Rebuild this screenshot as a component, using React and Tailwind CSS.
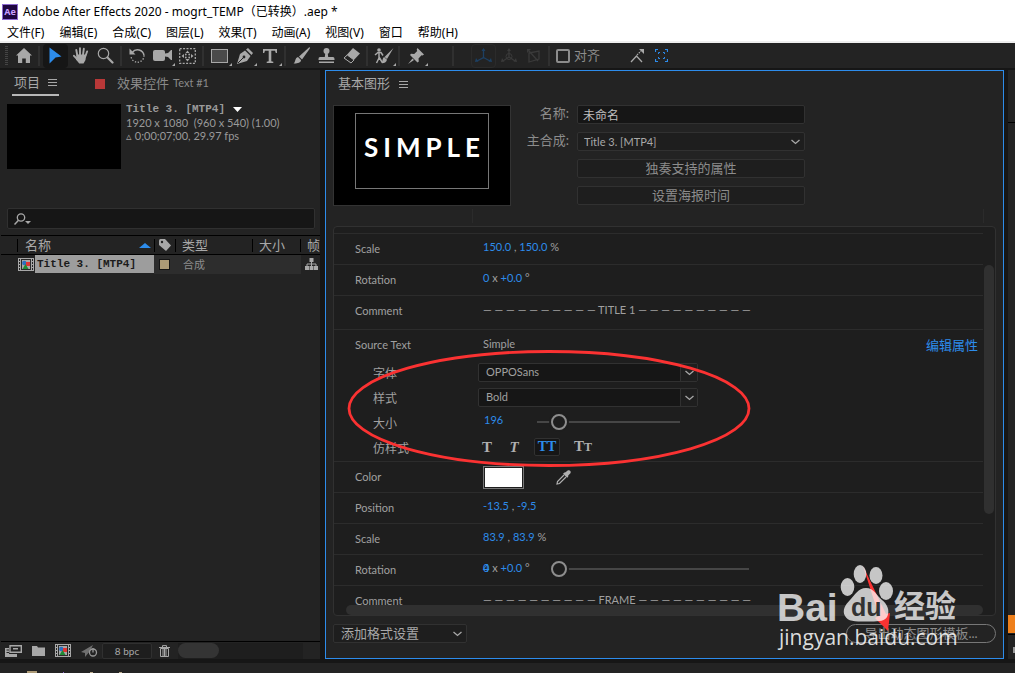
import React from "react";
import { clsx } from "clsx";

const menus = [
  "文件(F)",
  "编辑(E)",
  "合成(C)",
  "图层(L)",
  "效果(T)",
  "动画(A)",
  "视图(V)",
  "窗口",
  "帮助(H)",
];

/* ---------- shared bits ---------- */

const Svg = ({ w, h, className, children }) => (
  <svg
    width={w}
    height={h}
    viewBox={`0 0 ${w} ${h}`}
    fill="currentColor"
    className={clsx("shrink-0", className)}
    aria-hidden="true"
  >
    {children}
  </svg>
);

const Chevron = ({ className }) => (
  <Svg w={9} h={6} className={className}>
    <path d="M0.5 1L4.5 4.5L8.5 1" fill="none" stroke="currentColor" strokeWidth="1.3" />
  </Svg>
);

const PanelMenu = () => (
  <Svg w={9} h={9}>
    <path d="M0 1.5h9M0 4.5h9M0 7.5h9" stroke="currentColor" strokeWidth="1" />
  </Svg>
);

const CompIcon = () => (
  <Svg w={16} h={13}>
    <rect width="16" height="13" fill="#a8a8a8" />
    <path
      d="M1 1h1v2H1zM1 4h1v2H1zM1 7h1v2H1zM1 10h1v2H1zM14 1h1v2h-1zM14 4h1v2h-1zM14 7h1v2h-1zM14 10h1v2h-1z"
      fill="#232323"
    />
    <rect x="3" y="1" width="10" height="11" fill="#2b2b2b" />
    <rect x="4" y="2" width="8" height="9" fill="#a8a8a8" />
    <circle cx="6.3" cy="5" r="2.2" fill="#2d6fc0" />
    <rect x="8" y="4" width="4" height="4" fill="#e03434" />
    <path d="M7.5 6l3 5h-6z" fill="#1f8a34" />
  </Svg>
);

/* ---------- toolbar ---------- */

const Divider = ({ className }) => (
  <div className={clsx("w-[2px] h-5 bg-[#303030] ml-[2px] mr-[3px]", className)} />
);

const Tool = ({ label, active, more, children, className }) => (
  <button
    aria-label={label}
    className={clsx(
      "relative w-[25px] h-[24px] flex items-center justify-center rounded-sm",
      active && "bg-[#161616] text-[#2d8ceb]",
      className
    )}
  >
    {children}
    {more && (
      <Svg w={3} h={3} className="absolute right-0 bottom-[2px]">
        <path d="M3 0v3H0z" />
      </Svg>
    )}
  </button>
);

const Toolbar = () => (
  <div className="h-[25px] shrink-0 bg-[#232323] text-[#a8a8a8] flex items-center pl-[5px]">
    <div className="w-[3px] h-[19px] mr-[3px] bg-[repeating-linear-gradient(#444_0_1px,transparent_1px_2px)]" />
    <Tool label="主页">
      <Svg w={16} h={15}>
        <path d="M8 0l8 7.5h-2V15H9.8v-4.5H6.200V15H2V7.5H0z" />
      </Svg>
    </Tool>
    <Divider />
    <Tool label="选取" active>
      <Svg w={13} h={17}>
        <path d="M0.5 0.5L12.5 9.5L6.5 10.5L0.5 16.5z" />
      </Svg>
    </Tool>
    <Tool label="手形">
      <Svg w={16} h={17}>
        <path
          d="M4.3 8.5L3.3 3M7 8V1.2M10 8l.8-6.2M12.3 9.5l1.8-5M5 13L1 8.8"
          fill="none"
          stroke="currentColor"
          strokeWidth="1.9"
          strokeLinecap="round"
        />
        <path d="M3.5 7.5h9.8L12.5 13l-2 3.5H6.2L3 12.5z" />
      </Svg>
    </Tool>
    <Tool label="缩放">
      <Svg w={17} h={17}>
        <circle cx="6.5" cy="6.5" r="5.2" fill="none" stroke="currentColor" strokeWidth="1.2" />
        <path d="M10.5 10.5l5 5" stroke="currentColor" strokeWidth="2.2" strokeLinecap="round" />
      </Svg>
    </Tool>
    <Divider />
    <Tool label="旋转">
      <Svg w={17} h={17}>
        <path d="M3.3 5.5A6.5 6.5 0 0 1 15 8.5" fill="none" stroke="currentColor" strokeWidth="1.5" />
        <path
          d="M15 8.5A6.5 6.5 0 0 1 2 9"
          fill="none"
          stroke="currentColor"
          strokeWidth="1.3"
          strokeDasharray="1.3 1.6"
        />
        <path d="M0.5 1.5v6h6z" />
      </Svg>
    </Tool>
    <Tool label="摄像机" more>
      <Svg w={19} h={13}>
        <rect y="1" width="12" height="11" rx="2" />
        <path d="M12 4.5L15 4l3-3h1v10h-1l-3-3-3-.5z" />
      </Svg>
    </Tool>
    <Tool label="向后平移">
      <Svg w={17} h={16}>
        <rect
          x=".7"
          y=".7"
          width="15.6"
          height="14.6"
          fill="none"
          stroke="currentColor"
          strokeWidth="1.3"
          strokeDasharray="2 1.4"
        />
        <path d="M8.500 2.5l2 2.5h-4zM8.500 13.5l2-2.5h-4zM2.5 8L5 6v4zM14.5 8L12 6v4z" />
        <circle cx="6.8" cy="6.5" r=".9" />
        <circle cx="10.2" cy="6.5" r=".9" />
        <circle cx="6.8" cy="9.5" r=".9" />
        <circle cx="10.2" cy="9.5" r=".9" />
      </Svg>
    </Tool>
    <Divider />
    <Tool label="矩形" more>
      <Svg w={17} h={14}>
        <rect x=".5" y=".5" width="16" height="13" fill="#4a4a4a" stroke="currentColor" />
      </Svg>
    </Tool>
    <Tool label="钢笔" more>
      <Svg w={16} h={16}>
        <path d="M0 16L3 6l5-3.5L13.5 8 10 13z" />
        <path d="M9 1.5L11 0l5 5-1.5 2z" />
        <path d="M1 15l5.5-5.5" stroke="#232323" strokeWidth="1" />
        <circle cx="7" cy="9" r="1.4" fill="#232323" />
      </Svg>
    </Tool>
    <Tool label="文字" more>
      <Svg w={14} h={14}>
        <path d="M0 0h14v4h-1.2l-.8-2.3H8.3v10.6l2 .5V14H3.7v-1.2l2-.5V1.7H2L1.2 4H0z" />
      </Svg>
    </Tool>
    <Divider />
    <Tool label="画笔">
      <Svg w={17} h={17}>
        <path d="M16.5 0q.8.8 0 2L9 12.5 6 9.5z" />
        <path d="M5 10l3 3c0 3-4.5 3.800-7.500 3.500 2-1 1.500-6 4.500-6.500z" />
      </Svg>
    </Tool>
    <Tool label="仿制图章">
      <Svg w={17} h={16}>
        <circle cx="8.5" cy="3" r="3" />
        <path d="M7.3 5h2.400l.5 4H15q1.5 0 1.5 2v1h-16v-1q0-2 1.5-2h4.800zM1 13.500h15V15H1z" />
      </Svg>
    </Tool>
    <Tool label="橡皮擦">
      <Svg w={18} h={17}>
        <path d="M10 1l7 5.5L8 16 1 11z" />
        <path d="M4.3 8L11 13 8 16 1 11z" fill="#232323" stroke="currentColor" />
      </Svg>
    </Tool>
    <Divider />
    <Tool label="Roto 笔刷" more>
      <Svg w={20} h={16}>
        <circle cx="5" cy="2" r="1.800" />
        <path d="M1 7l3-2.5h3l2 3M5 5v5l-2.5 5M5 9l3 5" fill="none" stroke="currentColor" strokeWidth="1.5" />
        <path d="M19.5 0L13 11l-2.5-2zM10 9l3 2.700c-.5 3-4 3.800-6 3.300 2-1 1-4.500 3-6z" />
      </Svg>
    </Tool>
    <Divider />
    <Tool label="操控点" more>
      <Svg w={16} h={16}>
        <path d="M9.500 0L16 6.500l-1.500 1-1-.3-3 3.300.3 3-1.300 1L2 7l1-1.300 3.200.3 3-3-.5-1.300zM4.500 10.500l1.500 1.500-6 4z" />
      </Svg>
    </Tool>
    <Divider className="ml-[24px] mr-[17px]" />
    <div className="flex items-center text-[#3a3a3a]">
      <Tool label="本地轴" className="border border-[#2b2b2b] text-[#1d4063]">
        <Svg w={17} h={15}>
          <path d="M8.5 1v8.5L2 13M8.5 9.5L15 13" fill="none" stroke="currentColor" strokeWidth="1.3" />
          <path d="M6.5 3L8.5 0l2 3zM0 14l1-4 2.500 3.500zM17 14l-1-4-2.500 3.500z" />
        </Svg>
      </Tool>
      <Tool label="世界轴">
        <Svg w={16} h={15}>
          <path d="M8 1v8L2 13M8 9l6 4" fill="none" stroke="currentColor" strokeWidth="1.3" />
          <circle cx="8" cy="8.5" r="3" fill="none" stroke="currentColor" />
          <path d="M6 3l2-3 2 3zM0 14l1-4 2.500 3.500zM16 14l-1-4-2.500 3.500z" />
        </Svg>
      </Tool>
      <Tool label="视图轴">
        <Svg w={14} h={14}>
          <path d="M2 4l10-2v8L2 13zM2 2l9 10" fill="none" stroke="currentColor" strokeWidth="1.3" />
          <path d="M0 0h4L0 4z" />
        </Svg>
      </Tool>
    </div>
    <Divider className="mr-[6px]" />
    <label className="flex items-center gap-1 text-[13px] text-[#8c8c8c]">
      <input
        type="checkbox"
        className="appearance-none w-[14px] h-[14px] border-2 border-[#8c8c8c] rounded-xs"
      />
      对齐
    </label>
    <Tool label="对齐选项" className="ml-6">
      <Svg w={14} h={14}>
        <path d="M1 13l5.500-6L12 13" fill="none" stroke="currentColor" strokeWidth="1.3" />
        <path d="M7 6l4-4" stroke="currentColor" strokeWidth="1.2" strokeDasharray="1.5 1" />
        <path d="M9 0h5v5z" />
      </Svg>
    </Tool>
    <Tool label="对齐范围" className="text-[#2d8ceb]">
      <Svg w={13} h={13}>
        <path
          d="M3 .5H.5V3M10 .5h2.500V3M3 12.500H.5V10M10 12.500h2.500V10"
          fill="none"
          stroke="currentColor"
          strokeWidth="1.2"
        />
        <path
          d="M3.500 5V3.500H5M8 3.500h1.500V5M3.500 8v1.500H5M8 9.500h1.500V8"
          fill="none"
          stroke="currentColor"
        />
      </Svg>
    </Tool>
  </div>
);

/* ---------- project panel ---------- */

const ProjectPanel = () => (
  <section className="w-[320px] shrink-0 bg-[#232323] flex flex-col pl-px">
    <div className="flex items-start h-[26px] text-[13px] text-[#a8a8a8]">
      <div className="ml-[11px] px-[2px] pt-px h-[26px] flex items-center gap-2 border-b-2 border-[#b8b8b8]">
        项目 <PanelMenu />
      </div>
      <div className="flex items-center h-[26px] pt-px ml-9 text-[#8a8a8a]">
        <span className="w-[10px] h-[10px] bg-[#b83838] mr-3" />
        效果控件<span className="text-[11px] ml-1">Text #1</span>
      </div>
    </div>

    {/* Selected item */}
    <div className="flex items-start gap-[5px] mt-[7px] pl-[6px] h-[105px] text-[11px] leading-[13px] text-[#9a9a9a]">
      <div className="w-[114px] h-[65px] bg-black mt-px shrink-0" />
      <div className="whitespace-pre">
        <p className="flex items-center gap-2 font-bold font-['Liberation_Mono']">
          Title 3. [MTP4]
          <Svg w={9} h={6} className="text-white">
            <path d="M0 0h9L4.500 5z" />
          </Svg>
        </p>
        <p>1920 x 1080  (960 x 540) (1.00)</p>
        <p>▵ 0;00;07;00, 29.97 fps</p>
      </div>
    </div>

    {/* Search */}
    <div className="ml-[6px] mr-[5px] h-[21px] bg-[#161616] border border-[#303030] rounded-xs flex items-center pl-[6px] text-[#a8a8a8]">
      <Svg w={17} h={12}>
        <circle cx="7" cy="4.5" r="3.700" fill="none" stroke="currentColor" strokeWidth="1.3" />
        <path d="M4.500 7.200L.5 11.500" stroke="currentColor" strokeWidth="1.5" />
        <path d="M11 8h6l-3 3z" />
      </Svg>
      <input aria-label="搜索" className="flex-1 min-w-0 bg-transparent outline-none" />
    </div>

    <table className="mt-[6px] w-full table-fixed text-left text-[13px] text-[#a8a8a8] border-collapse">
      <thead>
        <tr className="h-[19px] border-y border-black leading-[17px]">
          <th className="w-[153px] font-normal p-0">
            <div className="flex items-center justify-between ml-4 pl-[7px] pr-[3px] border-l border-black h-[13px]">
              名称
              <Svg w={12} h={5} className="text-[#2d8ceb]">
                <path d="M0 5l6-5 6 5z" />
              </Svg>
            </div>
          </th>
          <th className="w-[22px] font-normal p-0">
            <div className="border-x border-black h-[13px] flex items-center justify-center">
              <Svg w={12} h={12}>
                <path d="M0 1.500Q0 0 1.500 0H6l6 6.500L7 12 0 6z" />
                <circle cx="3" cy="3" r="1.200" fill="#232323" />
              </Svg>
            </div>
          </th>
          <th className="w-[76px] font-normal py-0 pl-[6px]">类型</th>
          <th className="w-[49px] font-normal p-0">
            <div className="border-x border-black h-[13px] flex items-center pl-[6px]">大小</div>
          </th>
          <th className="font-normal py-0 pl-[6px] overflow-hidden">帧</th>
        </tr>
      </thead>
      <tbody>
        <tr className="h-[19px] leading-[17px]">
          <td className="p-0">
            <div className="flex items-center gap-px pl-[17px]">
              <CompIcon />
              <span className="flex-1 h-[18px] pl-[2px] bg-[#9d9d9d] text-[#1b1b1b] text-[11px] leading-[19px] font-bold font-['Liberation_Mono']">
                Title 3. [MTP4]
              </span>
            </div>
          </td>
          <td className="p-0 bg-[#2d2d2d]">
            <div className="w-[11px] h-[11px] ml-[5px] bg-[#ac9a76] border border-[#151515]" />
          </td>
          <td className="py-0 pl-[7px] bg-[#2d2d2d] text-[11px] text-[#8c8c8c]">合成</td>
          <td className="p-0 bg-[#2d2d2d]" />
          <td className="py-0 pl-1">
            <Svg w={13} h={12}>
              <path d="M4.500 0h4v4h-4zM0 8h4v4H0zM4.500 8h4v4h-4zM9 8h4v4H9z" />
              <path d="M6.500 4v4M2 8V6h9v2" fill="none" stroke="currentColor" />
            </Svg>
          </td>
        </tr>
      </tbody>
    </table>

    {/* Footer */}
    <div className="mt-auto h-[18px] border-t border-black flex items-center text-[#a8a8a8] pl-1">
      <button aria-label="解释素材">
        <Svg w={17} h={12}>
          <path d="M5 .7h11.300v6.600H5z" fill="none" stroke="currentColor" strokeWidth="1.4" />
          <path d="M8 3h5v1.500H8zM0 3h4v1.500H1.500v1H4V7H1.500v1H4v1h8v3H0z" />
        </Svg>
      </button>
      <button aria-label="新建文件夹" className="ml-[10px]">
        <Svg w={13} h={10}>
          <path d="M0 0h5l1 1.500h7V10H0z" />
        </Svg>
      </button>
      <button aria-label="新建合成" className="ml-[10px]">
        <CompIcon />
      </button>
      <button aria-label="项目设置" className="ml-[10px] text-[#707070]">
        <Svg w={17} h={12}>
          <path d="M0 7L12 0 9 6 4 12V8z" />
          <circle cx="12" cy="7.5" r="3.500" fill="#232323" stroke="#999" strokeWidth="1.3" />
          <path d="M12 3v4.500" stroke="#999" strokeWidth="1.3" />
        </Svg>
      </button>
      <button className="ml-1 w-[50px] h-[16px] bg-[#1e1e1e] border border-[#303030] rounded-xs text-[10px] leading-[14px]">
        8 bpc
      </button>
      <button aria-label="删除" className="ml-[7px]">
        <Svg w={11} h={12}>
          <path d="M0 2.500h11M3.500 2V.6h4V2" fill="none" stroke="currentColor" />
          <path d="M1.500 3.500h8v8h-8zM4 4v7M5.500 4v7M7 4v7" fill="none" stroke="currentColor" />
        </Svg>
      </button>
      <div className="ml-[8px] flex-1 h-[16px] bg-[#1e1e1e] mr-[17px]">
        <div className="w-[41px] h-[15px] rounded-full bg-[#343434]" />
      </div>
    </div>
  </section>
);

/* ---------- essential graphics panel ---------- */

const SelectBox = ({ id, label, value, className, arrowClass, textClass }) => (
  <div className={clsx("relative h-[19px] border border-[#313131] rounded-xs", className)}>
    <select
      id={id}
      aria-label={label}
      className={clsx("appearance-none block w-full h-full bg-transparent outline-none", textClass)}
    >
      <option>{value}</option>
    </select>
    <span
      className={clsx(
        "absolute right-0 inset-y-0 w-[17px] flex items-center justify-center text-[#a8a8a8] pointer-events-none",
        arrowClass
      )}
    >
      <Chevron />
    </span>
  </div>
);

const Slider = ({ label, value, className }) => (
  <input
    type="range"
    aria-label={label}
    defaultValue={value}
    className={clsx(
      "appearance-none h-4 bg-transparent [&::-webkit-slider-runnable-track]:h-[2px] [&::-webkit-slider-runnable-track]:bg-[#464646] [&::-webkit-slider-thumb]:appearance-none [&::-webkit-slider-thumb]:w-4 [&::-webkit-slider-thumb]:h-4 [&::-webkit-slider-thumb]:-mt-[7px] [&::-webkit-slider-thumb]:rounded-full [&::-webkit-slider-thumb]:border-2 [&::-webkit-slider-thumb]:border-[#8e8e8e] [&::-webkit-slider-thumb]:bg-[#1e1e1e] [&::-webkit-slider-thumb]:shadow-[0_0_0_2px_#1e1e1e]",
      className
    )}
  />
);

const Row = ({ label, tall, last, children }) => (
  <div
    className={clsx(
      "flex items-center shrink-0 pl-[21px]",
      tall ? "h-[34px] pb-[2px]" : "h-[31px]",
      !last && "border-b border-[#2c2c2c]"
    )}
  >
    <span className="w-[128px] shrink-0">{label}</span>
    <div className="flex items-center pb-[3px] whitespace-pre">{children}</div>
  </div>
);

const SubRow = ({ label, htmlFor, children }) => (
  <div className="flex items-center h-[25px] pl-[39px]">
    <label htmlFor={htmlFor} className="w-[105px] shrink-0 text-[12px]">
      {label}
    </label>
    {children}
  </div>
);

const Num = ({ children }) => <span className="text-[#2d8ceb]">{children}</span>;

const Properties = () => (
  <div className="relative flex-1 min-h-0 flex border border-[#313131] rounded-sm bg-[#1e1e1e] text-[11px] text-[#a0a0a0] overflow-hidden">
    <div className="flex-1 min-w-0 flex flex-col">
      <div className="h-[7px] shrink-0 border-b border-[#2c2c2c]" />
      <Row label="Scale">
        <Num>150.0</Num> , <Num>150.0</Num>{" %"}
      </Row>
      <Row label="Rotation">
        <Num>0</Num> x <Num>+0.0</Num> °
      </Row>
      <Row label="Comment" tall>
        — — — — — — — — — — TITLE 1 — — — — — — — — — —
      </Row>

      <div className="h-[132px] shrink-0 border-b border-[#2c2c2c]">
        <div className="flex items-center h-[31px] pl-[21px] pr-[5px]">
          <span className="w-[128px]">Source Text</span>
          <span className="pb-[2px]">Simple</span>
          <a href="#edit" className="ml-auto text-[13px] text-[#2d8ceb]">
            编辑属性
          </a>
        </div>
        <SubRow label="字体" htmlFor="font">
          <SelectBox
            id="font"
            value="OPPOSans"
            className="w-[220px] mb-[2px] bg-[#161616]"
            textClass="pl-[7px]"
            arrowClass="border-l border-[#313131] bg-[#1e1e1e]"
          />
        </SubRow>
        <SubRow label="样式" htmlFor="style">
          <SelectBox
            id="style"
            value="Bold"
            className="w-[220px] mb-[2px] bg-[#161616]"
            textClass="pl-[7px]"
            arrowClass="border-l border-[#313131] bg-[#1e1e1e]"
          />
        </SubRow>
        <SubRow label="大小">
          <span className="w-[59px] pl-[6px] pb-[6px] text-[#2d8ceb]">196</span>
          <Slider label="大小" value={11} className="w-[143px] mb-[3px]" />
        </SubRow>
        <SubRow label="仿样式">
          <div className="flex items-center pb-1 font-['Liberation_Serif'] text-[15px] leading-[16px] text-[#b0b0b0]">
            <button className="w-[18px] font-bold">T</button>
            <button className="w-[18px] ml-[9px] font-bold italic">T</button>
            <button className="w-[26px] h-[18px] ml-[11px] border border-[#313131] rounded-xs bg-[#161616] text-[#2d8ceb] font-bold text-[14px]">
              TT
            </button>
            <button className="ml-[14px] font-bold">
              T<span className="text-[12px]">T</span>
            </button>
          </div>
        </SubRow>
      </div>

      <div className="flex items-center h-[31px] shrink-0 pl-[21px] border-b border-[#2c2c2c]">
        <span className="w-[128px]">Color</span>
        <button
          aria-label="Color"
          className="w-[41px] h-[23px] bg-white border border-[#777] ring-1 ring-inset ring-[#1e1e1e]"
        />
        <button aria-label="吸管" className="ml-8 text-[#b0b0b0]">
          <Svg w={15} h={15}>
            <path d="M8.500 2.500l1-.3L12 .3q1.800-.4 2.500 1t-.8 2.700l-1.500 1.500v1.200l-1 1L7 3.800z" />
            <path d="M8 5L1.500 11.500 1 14l2.500-.5L10 7" fill="none" stroke="currentColor" strokeWidth="1.2" />
          </Svg>
        </button>
      </div>
      <Row label="Position">
        <Num>-13.5</Num> , <Num>-9.5</Num>
      </Row>
      <Row label="Scale">
        <Num>83.9</Num> , <Num>83.9</Num> %
      </Row>
      <Row label="Rotation">
        <span className="grid text-[#2d8ceb]">
          <span className="col-start-1 row-start-1">0</span>
          <span className="col-start-1 row-start-1">4</span>
        </span>
        {" x "}
        <Num>+0.0</Num> °
        <Slider label="Rotation" value={0} className="w-[198px] ml-[21px]" />
      </Row>
      <Row label="Comment" last>
        — — — — — — — — — — FRAME — — — — — — — — — —
      </Row>
    </div>
    <div className="w-[12px] shrink-0 pt-[38px] pl-px">
      <div className="w-[10px] h-[249px] rounded-full bg-[#303030]" />
    </div>
    <div className="absolute bottom-0 left-3 right-3 h-[10px] rounded-full bg-[#303030]" />
  </div>
);

const GraphicsPanel = () => (
  <section className="flex-1 min-w-0 bg-[#232323] border border-[#2d8ceb] flex flex-col px-[7px] text-[#a8a8a8]">
    <div className="flex items-center gap-[9px] h-[26px] pl-[5px] text-[13px]">
      基本图形 <PanelMenu />
    </div>

    <div className="flex mt-2 text-[13px]">
      <div className="w-[178px] h-[101px] shrink-0 bg-black border border-[#333] pt-[7px] pl-[21px]">
        <div className="w-[134px] h-[76px] border border-[#777] text-white text-[26px] leading-[66px] tracking-[5px] font-bold font-['Lato'] pl-[5px] text-center">
          SIMPLE
        </div>
      </div>
      <div className="grid grid-cols-[58px_228px] gap-2 auto-rows-[19px] leading-[17px]">
        <label htmlFor="name" className="text-right text-[#8c8c8c]">
          名称:
        </label>
        <input
          id="name"
          defaultValue="未命名"
          className="min-w-0 h-[19px] px-[5px] text-[12px] bg-[#161616] border border-[#313131] rounded-xs text-[#c0c0c0] outline-none"
        />
        <label htmlFor="comp" className="text-right text-[#8c8c8c]">
          主合成:
        </label>
        <SelectBox
          id="comp"
          value="Title 3. [MTP4]"
          className="bg-[#1e1e1e]"
          textClass="pl-[6px] text-[11px]"
        />
        <button className="col-start-2 border border-[#313131] rounded-xs bg-[#1e1e1e] text-[#8c8c8c]">
          独奏支持的属性
        </button>
        <button className="col-start-2 border border-[#313131] rounded-xs bg-[#1e1e1e] text-[#8c8c8c]">
          设置海报时间
        </button>
      </div>
    </div>

    <div className="h-[20px] shrink-0 pt-[3px] pl-[139px] pr-[12px]">
      <div className="h-[14px] border-x border-[#2b2b2b]" />
    </div>

    <Properties />

    <div className="flex items-center justify-between mt-2 mb-[15px] shrink-0 text-[13px]">
      <SelectBox
        label="添加格式设置"
        value="添加格式设置"
        className="w-[134px] bg-[#1e1e1e]"
        textClass="pl-[7px] leading-[17px]"
      />
      <button className="w-[150px] h-[19px] rounded-full border border-[#777] leading-[17px] text-[#8c8c8c]">
        导出动态图形模板...
      </button>
    </div>
  </section>
);

/* ---------- overlays ---------- */

const Annotations = () => (
  <svg
    width="1015"
    height="673"
    viewBox="0 0 1015 673"
    className="absolute left-0 top-0 pointer-events-none"
    aria-hidden="true"
  >
    <ellipse cx="549" cy="408.5" rx="200" ry="57" fill="none" stroke="#fb3232" strokeWidth="2.8" />
    <path d="M863 566L886 614L890 613L888 631L875 618L879 616z" fill="#fb3232" />
    <g fill="#fff" fillOpacity=".75">
      <text x="777" y="621" fontSize="39" fontWeight="700" fontFamily="Liberation Sans">
        Bai
      </text>
      <text x="894" y="617" fontSize="31" fontWeight="700" fontFamily="Noto Sans CJK SC, sans-serif">
        经验
      </text>
      <text x="779" y="645" fontSize="21" fontFamily="Open Sans, sans-serif" fillOpacity=".85">
        jingyan.baidu.com
      </text>
      <ellipse cx="847.5" cy="587" rx="6.8" ry="9" />
      <ellipse cx="860" cy="574" rx="6.3" ry="9" />
      <ellipse cx="876" cy="575.5" rx="6.5" ry="8.5" />
      <ellipse cx="886" cy="591" rx="7" ry="9" />
      <path d="M866 588c8 0 11 8 16 12s8 10 5.500 16-10 5.500-21.500 5.500-18 0-21-5.500 0-11 5-16 8-12 16-12z" />
    </g>
    <text x="851" y="616" fontSize="25" fontWeight="700" fill="#333" fontFamily="Liberation Sans">
      du
    </text>
  </svg>
);

export default function App() {
  return (
    <div className="relative h-screen flex flex-col bg-[#161616] overflow-hidden font-['Lato','Noto_Sans_CJK_SC',sans-serif]">
      <header className="shrink-0 h-[43px] bg-white text-black text-[12px] border-b-2 border-[#eeeeee] font-['Noto_Sans','Noto_Sans_CJK_SC',sans-serif]">
        <div className="flex items-center h-[23px] pl-[2px] gap-[5px] whitespace-pre">
          <span className="w-4 h-4 bg-[#1f0740] border border-[#8d6bd0] text-[#c9a0ff] text-[9px] leading-[14px] font-bold text-center">
            Ae
          </span>
          Adobe After Effects 2020 - mogrt_TEMP（已转换）.aep *
        </div>
        <nav className="flex items-center h-[20px] pl-[7px] gap-[15px]">
          {menus.map((menu) => (
            <button key={menu}>{menu}</button>
          ))}
        </nav>
      </header>

      <Toolbar />

      <main className="flex-1 min-h-0 flex pt-[2px] pb-[4px]">
        <ProjectPanel />
        <div className="w-[5px] shrink-0" />
        <GraphicsPanel />
        <aside className="w-[7px] shrink-0 ml-[4px] bg-[#232323] flex flex-col">
          <div className="h-[53px] border-b border-black" />
          <div className="mt-auto h-[18px] bg-[#ee7f1b]" />
          <div className="h-[25px] mt-px border-t border-black pt-3 pl-[5px]">
            <div className="w-[2px] h-[6px] bg-[#999]" />
          </div>
        </aside>
      </main>

      <footer className="h-[10px] shrink-0 bg-[#232323] flex items-end pl-[27px] gap-[26px]">
        <span className="w-[10px] h-[2px] bg-[#ac9a76]" />
        <span className="w-px h-px bg-[#8d6bd0]" />
        <span className="w-[3px] h-px bg-[#b9a98a]" />
        <span className="w-[3px] h-px bg-[#b9a98a]" />
      </footer>

      <Annotations />
    </div>
  );
}
